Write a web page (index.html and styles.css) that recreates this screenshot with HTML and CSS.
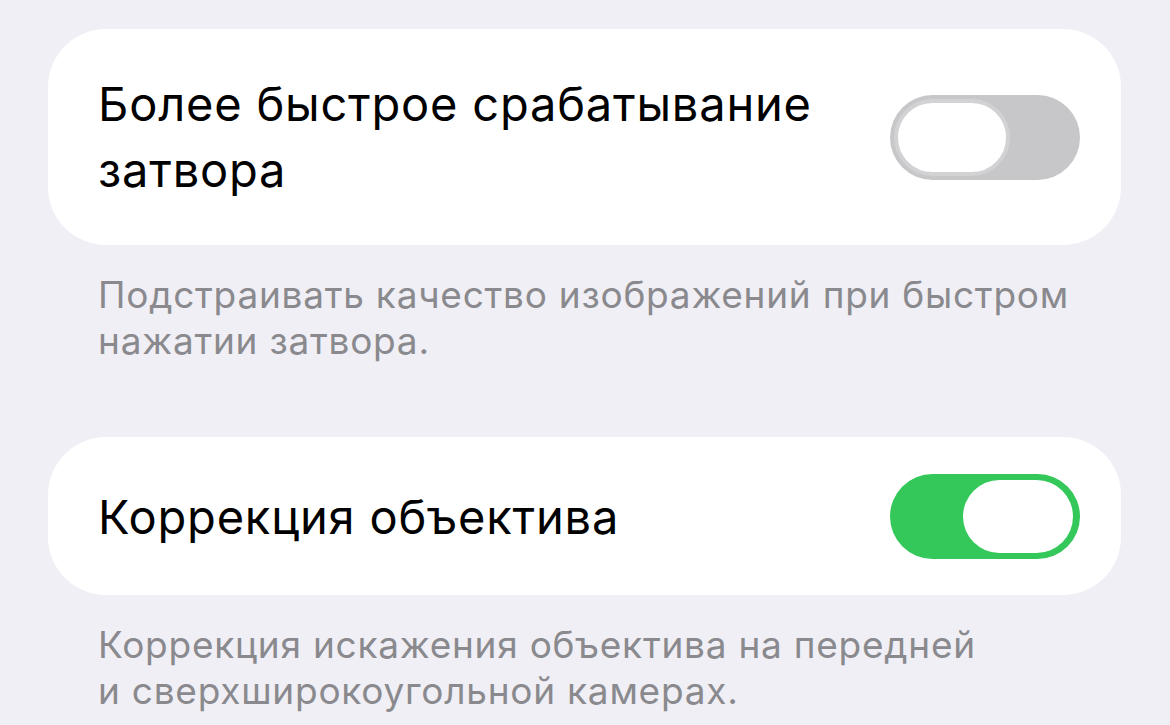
FILE: index.html
```html
<!DOCTYPE html>
<html lang="ru">
<head>
    <meta charset="UTF-8">
    <title>Камера</title>
    <link rel="stylesheet" href="styles.css">
</head>
<body>
    <div class="settings">
        <div class="group">
            <div class="row row-tall">
                <span class="label">Более быстрое срабатывание<br>затвора</span>
                <div class="toggle"><div class="knob"></div></div>
            </div>
        </div>
        <p class="footer">Подстраивать качество изображений при быстром<br>нажатии затвора.</p>

        <div class="group">
            <div class="row">
                <span class="label">Коррекция объектива</span>
                <div class="toggle on"><div class="knob"></div></div>
            </div>
        </div>
        <p class="footer">Коррекция искажения объектива на передней<br>и сверхширокоугольной камерах.</p>
    </div>
</body>
</html>
```

FILE: styles.css
```css
body {
    margin: 0;
    background: #f0eff5;
    font-family: Inter, "Noto Sans", sans-serif;
    -webkit-font-smoothing: antialiased;
}
.settings {
    padding: 29px 49px 0 48px;
}
.group {
    background: #fff;
    border-radius: 58px;
}
.row {
    display: flex;
    align-items: center;
    justify-content: space-between;
    padding: 37px 41px 36px 50px;
}
.row-tall {
    padding-top: 42px;
    padding-bottom: 42px;
}
.label {
    font-size: 47px;
    letter-spacing: 0.8px;
    line-height: 66px;
    color: #000;
}
.toggle {
    width: 190px;
    height: 85px;
    border-radius: 43px;
    background: #c7c7ca;
    padding: 4px;
    box-sizing: border-box;
    display: flex;
    flex-shrink: 0;
}
.toggle .knob {
    width: 116px;
    height: 100%;
    border-radius: 40px;
    background: #fff;
    box-sizing: border-box;
    border: 4px solid #d2d2d5;
}
.toggle.on {
    background: #34c759;
    justify-content: flex-end;
    padding: 6px 7px;
}
.toggle.on .knob {
    width: 110px;
    border: none;
}
.footer {
    margin: 27px 0 73px 50px;
    font-size: 37px;
    letter-spacing: 0.75px;
    line-height: 46px;
    color: #8a8a8e;
}
```
